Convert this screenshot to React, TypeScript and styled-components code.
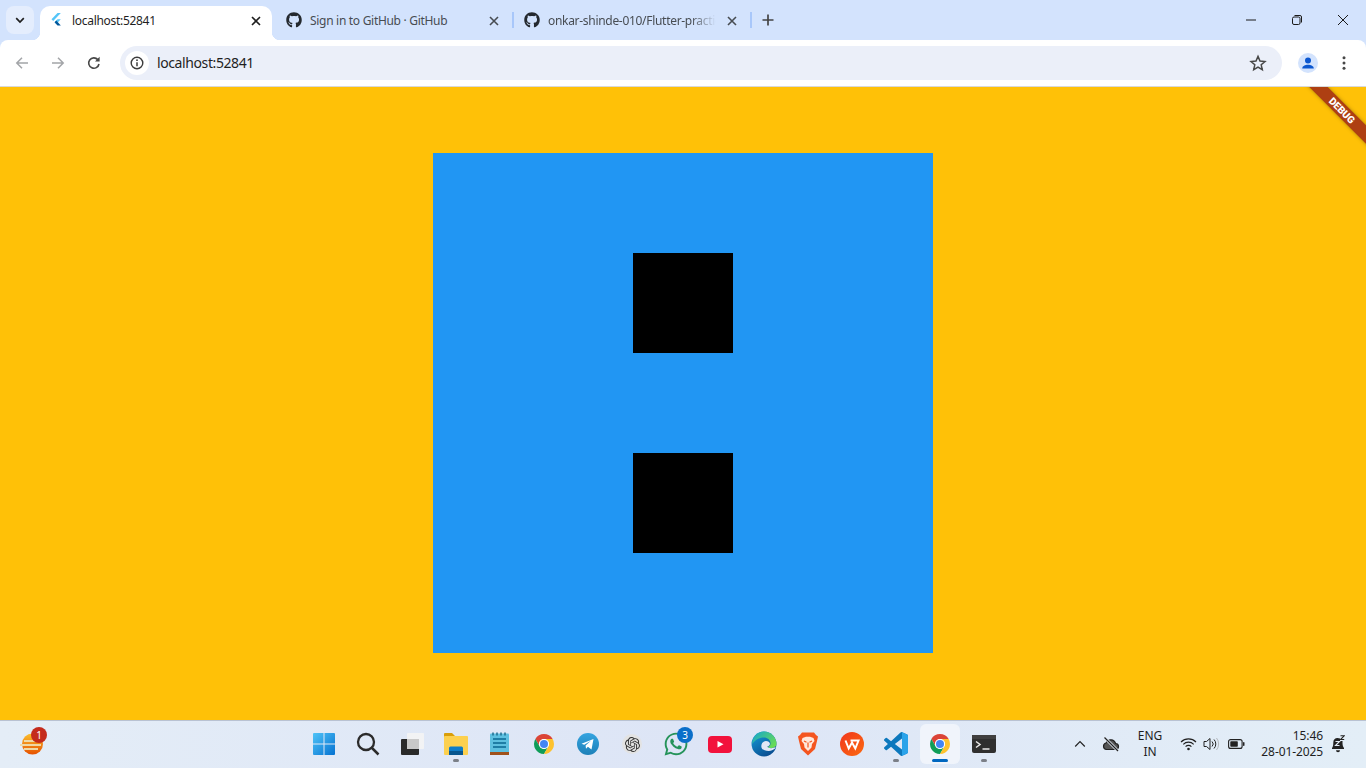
import React from 'react';
import styled, { createGlobalStyle } from 'styled-components';
import { FaGithub, FaWhatsapp } from 'react-icons/fa';
import { SiOpenai } from 'react-icons/si';

const GlobalStyle = createGlobalStyle`
  html, body {
    margin: 0;
    padding: 0;
    width: 1366px;
    height: 768px;
    overflow: hidden;
    font-family: 'Noto Sans', 'Liberation Sans', sans-serif;
  }
  * { box-sizing: border-box; }
`;

const FlutterIcon = () => (
  <svg width="16" height="16" viewBox="0 0 16 16">
    <polygon points="9.500,1 3.500,7.200 5.200,9 12.800,1" fill="#54c5f8" />
    <polygon points="12.800,7.300 9.500,7.300 6.600,10.200 8.300,12" fill="#54c5f8" />
    <polygon points="6.600,10.200 8.300,8.600 12.800,13.400 9.500,13.400" fill="#01579b" />
  </svg>
);

const CloseIcon = () => (
  <svg width="16" height="16" viewBox="0 0 16 16">
    <path d="M4 4l8 8M12 4l-8 8" stroke="currentColor" strokeWidth="1.600" fill="none" />
  </svg>
);

const ChevronDown = () => (
  <svg width="12" height="12" viewBox="0 0 12 12">
    <path d="M2.200 4.200L6 8l3.800-3.800" stroke="#1f1f1f" strokeWidth="1.700" fill="none" />
  </svg>
);

const BackIcon = () => (
  <svg width="16" height="16" viewBox="0 0 16 16">
    <path d="M14 8H3M8 2.800L2.800 8 8 13.200" stroke="#a3a5a8" strokeWidth="1.500" fill="none" />
  </svg>
);

const ForwardIcon = () => (
  <svg width="16" height="16" viewBox="0 0 16 16">
    <path d="M2 8h11M8 2.800L13.200 8 8 13.200" stroke="#a3a5a8" strokeWidth="1.500" fill="none" />
  </svg>
);

const ReloadIcon = () => (
  <svg width="16" height="16" viewBox="0 0 16 16">
    <path d="M13 9a5.200 5.200 0 1 1-1.200-4.400" stroke="#474747" strokeWidth="1.600" fill="none" />
    <polygon points="13.600,1.800 13.600,6.400 9,6.400" fill="#474747" />
  </svg>
);

const InfoIcon = () => (
  <svg width="14" height="14" viewBox="0 0 14 14">
    <circle cx="7" cy="7" r="5.800" stroke="#3c3c3c" strokeWidth="1.400" fill="none" />
    <path d="M7 6.200v4" stroke="#3c3c3c" strokeWidth="1.500" />
    <circle cx="7" cy="4.200" r="0.900" fill="#3c3c3c" />
  </svg>
);

const StarIcon = () => (
  <svg width="18" height="18" viewBox="0 0 18 18">
    <path d="M9 2.400l2 4.600 5 .5-3.800 3.300 1.100 4.900L9 13.100l-4.300 2.600 1.100-4.900L2 7.500l5-.5z" stroke="#474747" strokeWidth="1.500" fill="none" />
  </svg>
);

const PersonIcon = () => (
  <svg width="20" height="20" viewBox="0 0 20 20">
    <circle cx="10" cy="10" r="10" fill="#d3e3fd" />
    <circle cx="10" cy="7.600" r="3" fill="#0b57d0" />
    <path d="M4.200 15.600c0-2.600 3-3.800 5.800-3.800s5.800 1.200 5.800 3.800z" fill="#0b57d0" />
  </svg>
);

const MenuIcon = () => (
  <svg width="16" height="16" viewBox="0 0 16 16">
    <circle cx="8" cy="2.800" r="1.500" fill="#474747" />
    <circle cx="8" cy="8" r="1.500" fill="#474747" />
    <circle cx="8" cy="13.200" r="1.500" fill="#474747" />
  </svg>
);

const PlusIcon = () => (
  <svg width="14" height="14" viewBox="0 0 14 14">
    <path d="M7 1.500v11M1.500 7h11" stroke="#444" strokeWidth="1.700" />
  </svg>
);

const MinimizeIcon = () => (
  <svg width="12" height="12" viewBox="0 0 12 12">
    <path d="M1 6h10" stroke="#1b1b1b" strokeWidth="1" />
  </svg>
);

const RestoreIcon = () => (
  <svg width="12" height="12" viewBox="0 0 12 12">
    <rect x="1.500" y="3" width="7.500" height="7.500" rx="1.500" stroke="#1b1b1b" fill="none" />
    <path d="M3.500 1.500h5.500a1.500 1.500 0 0 1 1.500 1.500v5.500" stroke="#1b1b1b" fill="none" />
  </svg>
);

const WindowCloseIcon = () => (
  <svg width="12" height="12" viewBox="0 0 12 12">
    <path d="M1 1l10 10M11 1L1 11" stroke="#1b1b1b" strokeWidth="1" />
  </svg>
);

const WindowsLogo = () => (
  <svg width="24" height="24" viewBox="0 0 24 24">
    <defs>
      <linearGradient id="win" x1="0" y1="0" x2="1" y2="1">
        <stop offset="0" stopColor="#4fc3f7" />
        <stop offset="1" stopColor="#0572d1" />
      </linearGradient>
    </defs>
    <path d="M1 2a1 1 0 0 1 1-1h9.500v10.500H1zM12.500 1H22a1 1 0 0 1 1 1v9.500H12.500zM1 12.500h10.500V23H2a1 1 0 0 1-1-1zM12.500 12.500H23V22a1 1 0 0 1-1 1h-9.500z" fill="url(#win)" />
  </svg>
);

const SearchIcon = () => (
  <svg width="24" height="24" viewBox="0 0 24 24">
    <circle cx="10" cy="10" r="8" stroke="#2b2b2b" strokeWidth="2.300" fill="none" />
    <path d="M16 16l6.500 6.500" stroke="#2b2b2b" strokeWidth="2.500" />
  </svg>
);

const TaskViewIcon = () => (
  <svg width="24" height="24" viewBox="0 0 24 24">
    <rect x="1" y="7" width="18" height="16" rx="1" fill="#2a2a2a" />
    <rect x="7" y="1" width="17" height="16" rx="1" fill="#f4f4f4" opacity="0.9" />
    <rect x="7" y="7" width="12" height="10" fill="#c8c8c8" />
  </svg>
);

const ExplorerIcon = () => (
  <svg width="24" height="24" viewBox="0 0 24 24">
    <path d="M0 2a1 1 0 0 1 1-1h7l2.500 2.500V6H0z" fill="#d99e0a" />
    <rect x="0" y="4" width="24" height="19" rx="1" fill="#fcd04f" />
    <path d="M5 16a1.500 1.500 0 0 1 1.500-1.500h11A1.500 1.500 0 0 1 19 16v7H5z" fill="#0d7cc8" />
    <rect x="5" y="19" width="14" height="4" fill="#07568f" />
  </svg>
);

const NotepadIcon = () => (
  <svg width="24" height="24" viewBox="0 0 24 24">
    <rect x="2" y="1.500" width="19" height="20" rx="1" fill="#5ec0e0" />
    <path d="M5 0.500v3M9 0.500v3M13 0.500v3M17 0.500v3" stroke="#1e6d90" strokeWidth="1.500" />
    <path d="M5 7h13M5 11h13M5 15h13" stroke="#1f7ea6" strokeWidth="1.800" />
    <rect x="2" y="20" width="19" height="3" fill="#a0521c" />
  </svg>
);

const ChromeLogo = () => (
  <svg width="24" height="24" viewBox="0 0 48 48">
    <path d="M6.680 14A20 20 0 0 1 41.320 14H24A10 10 0 0 0 15.340 29z" fill="#db4437" />
    <path d="M6.680 14A20 20 0 0 0 24 44L32.660 29A10 10 0 0 1 15.340 29z" fill="#0f9d58" />
    <path d="M41.320 14A20 20 0 0 1 24 44L32.660 29A10 10 0 0 0 24 14z" fill="#fdc22e" />
    <circle cx="24" cy="24" r="10" fill="#fff" />
    <circle cx="24" cy="24" r="8" fill="#4285f4" />
  </svg>
);

const TelegramLogo = () => (
  <svg width="24" height="24" viewBox="0 0 24 24">
    <defs>
      <linearGradient id="tg" x1="0" y1="0" x2="0" y2="1">
        <stop offset="0" stopColor="#35a4e0" />
        <stop offset="1" stopColor="#1d80b8" />
      </linearGradient>
    </defs>
    <circle cx="12" cy="12" r="11" fill="url(#tg)" />
    <path d="M5.500 11.800L17.500 7l-2 10.500-3.600-2.700-1.900 1.900-.4-3.200 5.300-4.800-6.700 4.100z" fill="#fff" />
  </svg>
);

const ChatGptLogo = () => (
  <ChatGptCircle>
    <SiOpenai size={15} color="#333" />
  </ChatGptCircle>
);

const YoutubeLogo = () => (
  <svg width="24" height="24" viewBox="0 0 24 24">
    <rect x="0" y="4" width="24" height="17" rx="4" fill="#f2123c" />
    <polygon points="9.500,9 9.500,15.500 15.500,12.200" fill="#fff" />
  </svg>
);

const EdgeLogo = () => (
  <svg width="26" height="26" viewBox="0 0 24 24">
    <defs>
      <linearGradient id="edgeBlue" x1="0" y1="0" x2="0.600" y2="1">
        <stop offset="0" stopColor="#14a0dc" />
        <stop offset="1" stopColor="#0a4f92" />
      </linearGradient>
      <linearGradient id="edgeGreen" x1="0" y1="0" x2="1" y2="0.700">
        <stop offset="0" stopColor="#12a5d0" />
        <stop offset="1" stopColor="#68dc55" />
      </linearGradient>
    </defs>
    <circle cx="12" cy="12" r="11.500" fill="url(#edgeBlue)" />
    <path d="M12 .5A11.500 11.500 0 0 1 23.500 12c0 2.500-2.500 3.800-5 3.800-1.500 0-2.700-.4-3-1 1.500-.6 2.500-1.700 2.500-3.300C18 8 15 6 12 6 7.500 6 3.500 8.500 1 12 1.500 5.500 6 .5 12 .5z" fill="url(#edgeGreen)" />
    <path d="M9.500 14c0-2.800 2-4.800 4.300-4.800 2 0 3.700 1.100 3.700 2.500 0 1.200-1 2.100-2.500 2.700.4 1 2 1.500 3.500 1.500 1.500 0 3-.4 4.200-1.300-.2.7-.4 1.200-.7 1.800-1.500 1-3.500 2-5.500 2-3.500.1-7-1-7-4.400z" fill="#e0e7f5" />
  </svg>
);

const BraveLogo = () => (
  <svg width="24" height="24" viewBox="0 0 24 24">
    <path d="M6 .5h12l2 2.500 2 1.500-1 4.500-2 8-7 6.500-7-6.500-2-8-1-4.500L4 3z" fill="#f4551f" />
    <path d="M6.500 6l3.500-1.200h4L17.500 6l1 3-2.500 3-.5 3.500L12 19l-3.500-3.500L8 12 5.500 9z" fill="#ffe8dc" />
    <path d="M8 9l2.500 1.200M16 9l-2.500 1.200M12 10.500v5" stroke="#f4551f" strokeWidth="1.200" />
  </svg>
);

const WpsLogo = () => (
  <svg width="24" height="24" viewBox="0 0 24 24">
    <defs>
      <linearGradient id="wps" x1="0" y1="0" x2="1" y2="1">
        <stop offset="0" stopColor="#f1361d" />
        <stop offset="1" stopColor="#fb6a10" />
      </linearGradient>
    </defs>
    <circle cx="12" cy="12" r="12" fill="url(#wps)" />
    <path d="M5.500 8.500l3.200 8 3.300-6 3.300 6 3.200-8h-8" stroke="#fff" strokeWidth="2" fill="none" />
  </svg>
);

const VsCodeLogo = () => (
  <svg width="24" height="24" viewBox="0 0 24 24">
    <path d="M23.150 2.587L18.210.21a1.494 1.494 0 0 0-1.705.29l-9.460 8.630-4.120-3.128a.999.999 0 0 0-1.276.057L.327 7.261A1 1 0 0 0 .326 8.740L3.899 12 .326 15.260a1 1 0 0 0 .001 1.479L1.650 17.940a.999.999 0 0 0 1.276.057l4.120-3.128 9.460 8.630a1.492 1.492 0 0 0 1.704.29l4.942-2.377A1.500 1.500 0 0 0 24 20.060V3.939a1.500 1.500 0 0 0-.850-1.352zm-5.146 14.861L10.826 12l7.178-5.448v10.896z" fill="#0c78bd" />
    <path d="M18 .1a1.500 1.500 0 0 1 .210.110l4.940 2.377A1.500 1.500 0 0 1 24 3.939V20.060a1.500 1.500 0 0 1-.850 1.352l-4.940 2.378a1.500 1.500 0 0 1-.210.080V6.600z" fill="#2aa3ea" />
  </svg>
);

const TerminalLogo = () => (
  <svg width="24" height="24" viewBox="0 0 24 24">
    <rect x="0" y="3" width="24" height="18" rx="2" fill="#2f2f2f" />
    <rect x="0" y="3" width="24" height="4" fill="#3f3f3f" />
    <path d="M4 9.500l4 3-4 3" stroke="#eaeaea" strokeWidth="1.500" fill="none" />
    <path d="M10.500 17h7" stroke="#eaeaea" strokeWidth="1.500" />
  </svg>
);

const WidgetIcon = () => (
  <svg width="24" height="24" viewBox="0 0 24 24">
    <defs>
      <linearGradient id="sun" x1="0" y1="0" x2="0" y2="1">
        <stop offset="0" stopColor="#fbc02d" />
        <stop offset="1" stopColor="#e65100" />
      </linearGradient>
    </defs>
    <circle cx="12.500" cy="12" r="10.500" fill="url(#sun)" />
    <path d="M4 9h16M0 13h21M4 17h14" stroke="#efd9a6" strokeWidth="1.800" />
  </svg>
);

const ChevronUp = () => (
  <svg width="12" height="12" viewBox="0 0 12 12">
    <path d="M1.200 8.500L6 3.700l4.800 4.800" stroke="#222" strokeWidth="1.200" fill="none" />
  </svg>
);

const CloudOffIcon = () => (
  <svg width="18" height="18" viewBox="0 0 18 18">
    <path d="M4.500 14.500a3.300 3.300 0 0 1-.4-6.500 5 5 0 0 1 9.500.5 3 3 0 0 1-.2 6z" fill="#555" stroke="#222" strokeWidth="1.200" />
    <path d="M2.500 2.500l13.500 13.500" stroke="#e4ecf6" strokeWidth="2.800" />
    <path d="M2.500 2.500l13.500 13.500" stroke="#222" strokeWidth="1.200" />
  </svg>
);

const WifiIcon = () => (
  <svg width="17" height="14" viewBox="0 0 17 14">
    <path d="M1 5a10.500 10.500 0 0 1 15 0M3.300 7.300a7.300 7.300 0 0 1 10.400 0M5.600 9.600a4 4 0 0 1 5.800 0" stroke="#222" strokeWidth="1.100" fill="none" />
    <circle cx="8.500" cy="12" r="1.300" fill="#222" />
  </svg>
);

const VolumeIcon = () => (
  <svg width="17" height="16" viewBox="0 0 17 16">
    <path d="M1 5.500h2.500L7 2.500v11L3.500 10.500H1z" stroke="#222" strokeWidth="1" fill="none" />
    <path d="M9 5.500a3.500 3.500 0 0 1 0 5M11 3.500a6.500 6.500 0 0 1 0 9" stroke="#222" strokeWidth="1" fill="none" />
    <path d="M13.500 2a9.500 9.500 0 0 1 0 12" stroke="#b5b8bd" strokeWidth="1" fill="none" />
  </svg>
);

const BatteryIcon = () => (
  <svg width="17" height="12" viewBox="0 0 17 12">
    <rect x="0.600" y="1.600" width="13.500" height="8.800" rx="2" stroke="#222" strokeWidth="1.100" fill="none" />
    <rect x="2.300" y="3.200" width="7.500" height="5.600" rx="0.800" fill="#222" />
    <rect x="15" y="4" width="1.500" height="4" rx="0.700" fill="#222" />
  </svg>
);

const BellIcon = () => (
  <svg width="14" height="18" viewBox="0 0 14 18">
    <path d="M1 13c1-1 1.300-3 1.300-5.500C2.300 4.500 4 3 6.500 3c1 0 1.800.2 2.500.6v2.400h2.500V8c0 2 .5 4 1.500 5v1H1z" fill="#222" />
    <path d="M4.500 6.500h4l-4 4h4" stroke="#e4ecf6" strokeWidth="1.100" fill="none" />
    <path d="M9.500.8h3.700l-3.700 3.700h3.700" stroke="#222" strokeWidth="1.100" fill="none" />
    <path d="M5 15.200h4a2 2 0 0 1-4 0z" fill="#222" />
  </svg>
);

type AppEntry = {
  id: string;
  icon: React.ReactNode;
  running?: boolean;
  active?: boolean;
  badge?: string;
};

const apps: AppEntry[] = [
  { id: 'start', icon: <WindowsLogo /> },
  { id: 'search', icon: <SearchIcon /> },
  { id: 'taskview', icon: <TaskViewIcon /> },
  { id: 'explorer', icon: <ExplorerIcon />, running: true },
  { id: 'notepad', icon: <NotepadIcon /> },
  { id: 'chrome-pin', icon: <ChromeLogo /> },
  { id: 'telegram', icon: <TelegramLogo /> },
  { id: 'chatgpt', icon: <ChatGptLogo /> },
  { id: 'whatsapp', icon: <FaWhatsapp size={26} color="#25935a" />, badge: '3' },
  { id: 'youtube', icon: <YoutubeLogo /> },
  { id: 'edge', icon: <EdgeLogo /> },
  { id: 'brave', icon: <BraveLogo /> },
  { id: 'wps', icon: <WpsLogo /> },
  { id: 'vscode', icon: <VsCodeLogo />, running: true },
  { id: 'chrome', icon: <ChromeLogo />, active: true },
  { id: 'terminal', icon: <TerminalLogo />, running: true },
];

const App = () => {
  return (
    <>
      <GlobalStyle />
      <Screen>
        <TabStrip>
          <TabRow>
            <ExpandBtn>
              <ChevronDown />
            </ExpandBtn>
            <Tab $active>
              <FlutterIcon />
              <TabTitle $active>localhost:52841</TabTitle>
              <TabClose $active>
                <CloseIcon />
              </TabClose>
            </Tab>
            <Tab>
              <FaGithub size={16} color="#24292f" />
              <TabTitle>Sign in to GitHub · GitHub</TabTitle>
              <TabClose>
                <CloseIcon />
              </TabClose>
            </Tab>
            <TabSeparator />
            <Tab>
              <FaGithub size={16} color="#24292f" />
              <TabTitle $fade>onkar-shinde-010/Flutter-practice</TabTitle>
              <TabClose>
                <CloseIcon />
              </TabClose>
            </Tab>
            <TabSeparator />
            <NewTabBtn>
              <PlusIcon />
            </NewTabBtn>
          </TabRow>
          <WindowControls>
            <WindowBtn>
              <MinimizeIcon />
            </WindowBtn>
            <WindowBtn>
              <RestoreIcon />
            </WindowBtn>
            <WindowBtn>
              <WindowCloseIcon />
            </WindowBtn>
          </WindowControls>
        </TabStrip>

        <Toolbar>
          <ToolBtn>
            <BackIcon />
          </ToolBtn>
          <ToolBtn>
            <ForwardIcon />
          </ToolBtn>
          <ToolBtn>
            <ReloadIcon />
          </ToolBtn>
          <Omnibox>
            <SiteInfo>
              <InfoIcon />
            </SiteInfo>
            <UrlText>localhost:52841</UrlText>
            <StarBtn>
              <StarIcon />
            </StarBtn>
          </Omnibox>
          <ToolBtn>
            <PersonIcon />
          </ToolBtn>
          <ToolBtn>
            <MenuIcon />
          </ToolBtn>
        </Toolbar>

        <Viewport>
          <BlueSquare>
            <BlackSquare />
            <BlackSquare />
          </BlueSquare>
          <DebugCorner>
            <DebugRibbon>DEBUG</DebugRibbon>
          </DebugCorner>
        </Viewport>

        <Taskbar>
          <WidgetArea>
            <WidgetSlot>
              <WidgetIcon />
              <WidgetBadge>1</WidgetBadge>
            </WidgetSlot>
          </WidgetArea>
          <AppList>
            {apps.map((app) => (
              <AppSlot key={app.id} $active={app.active}>
                {app.icon}
                {app.badge && <AppBadge>{app.badge}</AppBadge>}
                {(app.running || app.active) && <RunDot $active={app.active} />}
              </AppSlot>
            ))}
          </AppList>
          <Tray>
            <TrayIcon $width={20}>
              <ChevronUp />
            </TrayIcon>
            <TrayIcon $width={42}>
              <CloudOffIcon />
            </TrayIcon>
            <LangBox>
              <span>ENG</span>
              <span>IN</span>
            </LangBox>
            <TrayIcon $width={24}>
              <WifiIcon />
            </TrayIcon>
            <TrayIcon $width={22}>
              <VolumeIcon />
            </TrayIcon>
            <TrayIcon $width={28}>
              <BatteryIcon />
            </TrayIcon>
            <Clock>
              <span>15:46</span>
              <span>28-01-2025</span>
            </Clock>
            <TrayIcon $width={30}>
              <BellIcon />
            </TrayIcon>
          </Tray>
        </Taskbar>
      </Screen>
    </>
  );
};

export default App;

const Screen = styled.div`
  width: 1366px;
  height: 768px;
  display: flex;
  flex-direction: column;
  overflow: hidden;
  background: #d3e3fd;
`;

const TabStrip = styled.div`
  height: 40px;
  flex: none;
  display: flex;
  background: #d3e3fd;
`;

const TabRow = styled.div`
  display: flex;
  align-items: stretch;
  padding: 6px 0 0 6px;
`;

const ExpandBtn = styled.div`
  width: 28px;
  height: 28px;
  margin-right: 6px;
  border-radius: 8px;
  background: #e4edfd;
  display: flex;
  align-items: center;
  justify-content: center;
`;

const Tab = styled.div<{ $active?: boolean }>`
  position: relative;
  width: 232px;
  height: 34px;
  padding: 0 8px 6px;
  margin-right: ${(p) => (p.$active ? '6px' : '0')};
  display: flex;
  align-items: center;
  gap: 8px;
  border-radius: 10px 10px 0 0;
  background: ${(p) => (p.$active ? '#fff' : 'transparent')};

  ${(p) =>
    p.$active &&
    `
    &::before, &::after {
      content: '';
      position: absolute;
      bottom: 0;
      width: 8px;
      height: 8px;
    }
    &::before {
      left: -8px;
      background: radial-gradient(circle at 0 0, transparent 8px, #fff 8.5px);
    }
    &::after {
      right: -8px;
      background: radial-gradient(circle at 100% 0, transparent 8px, #fff 8.5px);
    }
  `}
`;

const TabTitle = styled.span<{ $active?: boolean; $fade?: boolean }>`
  flex: 1;
  min-width: 0;
  overflow: hidden;
  white-space: nowrap;
  font-size: 12px;
  letter-spacing: -0.3px;
  color: ${(p) => (p.$active ? '#1f1f1f' : '#474c52')};
  ${(p) =>
    p.$fade &&
    `
    -webkit-mask-image: linear-gradient(to right, #000 85%, transparent 100%);
    mask-image: linear-gradient(to right, #000 85%, transparent 100%);
  `}
`;

const TabClose = styled.div<{ $active?: boolean }>`
  width: 16px;
  height: 16px;
  flex: none;
  color: ${(p) => (p.$active ? '#1f1f1f' : '#474c52')};
`;

const TabSeparator = styled.div`
  width: 2px;
  height: 16px;
  margin: 6px 2px 0;
  background: #a8c7fa;
`;

const NewTabBtn = styled.div`
  width: 28px;
  height: 28px;
  display: flex;
  align-items: center;
  justify-content: center;
`;

const WindowControls = styled.div`
  margin-left: auto;
  display: flex;
`;

const WindowBtn = styled.div`
  width: 46px;
  height: 40px;
  display: flex;
  align-items: center;
  justify-content: center;
`;

const Toolbar = styled.div`
  height: 47px;
  flex: none;
  padding: 0 4px 1px;
  display: flex;
  align-items: center;
  background: #fff;
  border-bottom: 1px solid #d9d9d9;
  border-radius: 8px 8px 0 0;
`;

const ToolBtn = styled.div`
  width: 36px;
  height: 36px;
  flex: none;
  display: flex;
  align-items: center;
  justify-content: center;
`;

const Omnibox = styled.div`
  flex: 1;
  height: 34px;
  margin: 0 8px;
  padding-left: 5px;
  display: flex;
  align-items: center;
  border-radius: 17px;
  background: #ebeff9;
`;

const SiteInfo = styled.div`
  width: 24px;
  height: 24px;
  border-radius: 50%;
  background: #fff;
  display: flex;
  align-items: center;
  justify-content: center;
`;

const UrlText = styled.span`
  margin-left: 8px;
  font-size: 14px;
  letter-spacing: -0.4px;
  color: #1f1f1f;
`;

const StarBtn = styled.div`
  width: 24px;
  height: 24px;
  margin-left: auto;
  margin-right: 12px;
  display: flex;
  align-items: center;
  justify-content: center;
`;

const Viewport = styled.main`
  position: relative;
  flex: 1;
  min-height: 0;
  padding-bottom: 1px;
  display: flex;
  align-items: center;
  justify-content: center;
  background: #ffc107;
`;

const BlueSquare = styled.div`
  width: 500px;
  height: 500px;
  display: flex;
  flex-direction: column;
  align-items: center;
  justify-content: space-evenly;
  background: #2196f3;
`;

const BlackSquare = styled.div`
  width: 100px;
  height: 100px;
  background: #000;
`;

const DebugCorner = styled.div`
  position: absolute;
  top: 0;
  right: 0;
  width: 80px;
  height: 80px;
  overflow: hidden;
`;

const DebugRibbon = styled.div`
  position: absolute;
  left: -4px;
  top: 17px;
  width: 120px;
  height: 13px;
  display: flex;
  align-items: center;
  justify-content: center;
  transform: rotate(45deg);
  background: #ae3f12;
  box-shadow: 0 0 4px rgba(0, 0, 0, 0.35);
  color: #fff;
  font-family: Roboto, 'Liberation Sans', sans-serif;
  font-size: 10px;
  font-weight: 900;
`;

const Taskbar = styled.footer`
  height: 48px;
  flex: none;
  padding-bottom: 1px;
  display: flex;
  align-items: center;
  border-top: 1px solid #b9c2d2;
  background: linear-gradient(to right, #e4edf7, #dde5f6 50%, #e3eef7);
`;

const WidgetArea = styled.div`
  width: 302px;
  flex: none;
  padding-left: 20px;
`;

const WidgetSlot = styled.div`
  position: relative;
  width: 24px;
  height: 24px;
`;

const WidgetBadge = styled.span`
  position: absolute;
  top: -5px;
  left: 11px;
  width: 16px;
  height: 16px;
  border-radius: 50%;
  background: #c42b1c;
  color: #fff;
  font-size: 10px;
  line-height: 16px;
  text-align: center;
`;

const AppList = styled.div`
  display: flex;
  align-items: center;
`;

const AppSlot = styled.div<{ $active?: boolean }>`
  position: relative;
  width: 38px;
  height: 38px;
  margin: 0 3px;
  display: flex;
  align-items: center;
  justify-content: center;
  border-radius: 5px;
  background: ${(p) => (p.$active ? '#f0f4fb' : 'transparent')};
  box-shadow: ${(p) => (p.$active ? '0 0 0 1px rgba(255, 255, 255, 0.5)' : 'none')};
`;

const AppBadge = styled.span`
  position: absolute;
  top: 2px;
  right: 2px;
  width: 16px;
  height: 16px;
  border-radius: 50%;
  background: #0b6fc9;
  color: #fff;
  font-size: 10px;
  line-height: 16px;
  text-align: center;
`;

const RunDot = styled.span<{ $active?: boolean }>`
  position: absolute;
  bottom: 1px;
  left: 50%;
  width: ${(p) => (p.$active ? '16px' : '6px')};
  height: 3px;
  border-radius: 2px;
  transform: translateX(-50%);
  background: ${(p) => (p.$active ? '#0067c0' : '#7b7f87')};
`;

const ChatGptCircle = styled.div`
  width: 20px;
  height: 20px;
  border-radius: 50%;
  background: #e3e3e3;
  display: flex;
  align-items: center;
  justify-content: center;
`;

const Tray = styled.div`
  margin-left: auto;
  display: flex;
  align-items: center;
  padding-right: 13px;
`;

const TrayIcon = styled.div<{ $width: number }>`
  width: ${(p) => p.$width}px;
  display: flex;
  align-items: center;
  justify-content: center;
`;

const LangBox = styled.div`
  width: 36px;
  margin-right: 8px;
  display: flex;
  flex-direction: column;
  align-items: center;
  font-size: 12px;
  line-height: 16px;
  color: #1f1f1f;
`;

const Clock = styled.div`
  width: 62px;
  flex: none;
  margin-left: 11px;
  display: flex;
  flex-direction: column;
  align-items: flex-end;
  font-size: 12px;
  letter-spacing: -0.1px;
  line-height: 16px;
  white-space: nowrap;
  color: #1f1f1f;
`;
